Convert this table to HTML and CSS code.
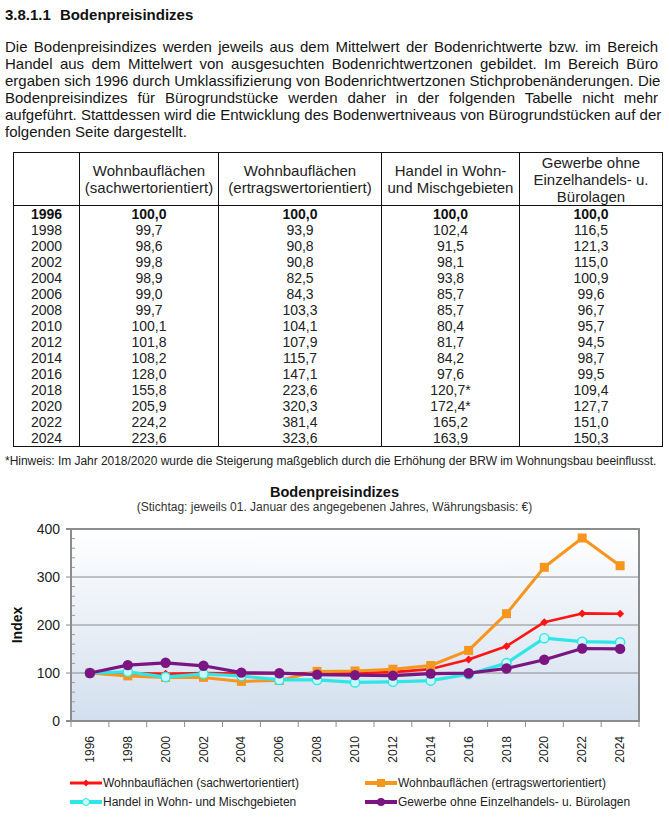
FILE: index.html
```html
<!DOCTYPE html>
<html lang="de">
<head>
<meta charset="utf-8">
<title>Bodenpreisindizes</title>
<link rel="stylesheet" href="styles.css">
</head>
<body>
<div class="page">
  <h1 class="heading"><span class="heading-num">3.8.1.1</span>Bodenpreisindizes</h1>
  <p class="intro">
    <span class="line">Die Bodenpreisindizes werden jeweils aus dem Mittelwert der Bodenrichtwerte bzw. im Bereich</span>
    <span class="line">Handel aus dem Mittelwert von ausgesuchten Bodenrichtwertzonen gebildet. Im Bereich Büro</span>
    <span class="line">ergaben sich 1996 durch Umklassifizierung von Bodenrichtwertzonen Stichprobenänderungen. Die</span>
    <span class="line">Bodenpreisindizes für Bürogrundstücke werden daher in der folgenden Tabelle nicht mehr</span>
    <span class="line">aufgeführt. Stattdessen wird die Entwicklung des Bodenwertniveaus von Bürogrundstücken auf der</span>
    <span class="line last">folgenden Seite dargestellt.</span>
  </p>

  <table class="index-table">
    <colgroup>
      <col class="c-year"><col class="c-a"><col class="c-b"><col class="c-c"><col class="c-d">
    </colgroup>
    <thead>
      <tr>
        <th></th>
        <th>Wohnbauflächen<br>(sachwertorientiert)</th>
        <th>Wohnbauflächen<br>(ertragswertorientiert)</th>
        <th>Handel in Wohn-<br>und Mischgebieten</th>
        <th>Gewerbe ohne<br>Einzelhandels- u.<br>Bürolagen</th>
      </tr>
    </thead>
    <tbody>
      <tr class="base"><td>1996</td><td>100,0</td><td>100,0</td><td>100,0</td><td>100,0</td></tr>
      <tr><td>1998</td><td>99,7</td><td>93,9</td><td>102,4</td><td>116,5</td></tr>
      <tr><td>2000</td><td>98,6</td><td>90,8</td><td>91,5</td><td>121,3</td></tr>
      <tr><td>2002</td><td>99,8</td><td>90,8</td><td>98,1</td><td>115,0</td></tr>
      <tr><td>2004</td><td>98,9</td><td>82,5</td><td>93,8</td><td>100,9</td></tr>
      <tr><td>2006</td><td>99,0</td><td>84,3</td><td>85,7</td><td>99,6</td></tr>
      <tr><td>2008</td><td>99,7</td><td>103,3</td><td>85,7</td><td>96,7</td></tr>
      <tr><td>2010</td><td>100,1</td><td>104,1</td><td>80,4</td><td>95,7</td></tr>
      <tr><td>2012</td><td>101,8</td><td>107,9</td><td>81,7</td><td>94,5</td></tr>
      <tr><td>2014</td><td>108,2</td><td>115,7</td><td>84,2</td><td>98,7</td></tr>
      <tr><td>2016</td><td>128,0</td><td>147,1</td><td>97,6</td><td>99,5</td></tr>
      <tr><td>2018</td><td>155,8</td><td>223,6</td><td>120,7*</td><td>109,4</td></tr>
      <tr><td>2020</td><td>205,9</td><td>320,3</td><td>172,4*</td><td>127,7</td></tr>
      <tr><td>2022</td><td>224,2</td><td>381,4</td><td>165,2</td><td>151,0</td></tr>
      <tr><td>2024</td><td>223,6</td><td>323,6</td><td>163,9</td><td>150,3</td></tr>
    </tbody>
  </table>

  <p class="note">*Hinweis: Im Jahr 2018/2020 wurde die Steigerung maßgeblich durch die Erhöhung der BRW im Wohnungsbau beeinflusst.</p>

  <section class="chart">
    <h2 class="chart-title">Bodenpreisindizes</h2>
    <p class="chart-sub">(Stichtag: jeweils 01. Januar des angegebenen Jahres, Währungsbasis: €)</p>
    <svg class="plot" width="669" height="258" viewBox="0 0 669 258" xmlns="http://www.w3.org/2000/svg">
      <defs>
        <linearGradient id="bg" x1="0" y1="0" x2="0" y2="1">
          <stop offset="0" stop-color="#ffffff"/>
          <stop offset="1" stop-color="#d3dfee"/>
        </linearGradient>
        <marker id="m-red" markerUnits="userSpaceOnUse" markerWidth="10" markerHeight="10" refX="5" refY="5" overflow="visible">
          <path d="M5 1 L9 5 L5 9 L1 5 Z" fill="#ff1414"/>
        </marker>
        <marker id="m-orange" markerUnits="userSpaceOnUse" markerWidth="10" markerHeight="10" refX="5" refY="5" overflow="visible">
          <rect x="0.5" y="0.5" width="9" height="9" fill="#f7961e"/>
        </marker>
        <marker id="m-cyan" markerUnits="userSpaceOnUse" markerWidth="12" markerHeight="12" refX="6" refY="6" overflow="visible">
          <circle cx="6" cy="6" r="4.6" fill="#c8f8f8" stroke="#2fe6e6" stroke-width="1.4"/>
        </marker>
        <marker id="m-purple" markerUnits="userSpaceOnUse" markerWidth="12" markerHeight="12" refX="6" refY="6" overflow="visible">
          <circle cx="6" cy="6" r="5.2" fill="#7a1582"/>
        </marker>
      </defs>

      <rect x="71" y="15" width="568" height="192" fill="url(#bg)"/>
      <g stroke="#8a8a8a" stroke-width="1">
        <line x1="66" y1="63" x2="639" y2="63"/>
        <line x1="66" y1="111" x2="639" y2="111"/>
        <line x1="66" y1="159" x2="639" y2="159"/>
      </g>
      <g stroke="#8c8c8c" stroke-width="2" fill="none">
        <line x1="66" y1="15" x2="640" y2="15"/>
        <line x1="639" y1="15" x2="639" y2="208"/>
        <line x1="66" y1="207" x2="640" y2="207"/>
        <line x1="71" y1="14" x2="71" y2="208"/>
      </g>
      <g stroke="#9a9a9a" stroke-width="1">
        <line x1="72" y1="24.6" x2="75" y2="24.6"/><line x1="72" y1="34.2" x2="75" y2="34.2"/><line x1="72" y1="43.8" x2="75" y2="43.8"/><line x1="72" y1="53.4" x2="75" y2="53.4"/>
        <line x1="72" y1="72.6" x2="75" y2="72.6"/><line x1="72" y1="82.2" x2="75" y2="82.2"/><line x1="72" y1="91.8" x2="75" y2="91.8"/><line x1="72" y1="101.4" x2="75" y2="101.4"/>
        <line x1="72" y1="120.6" x2="75" y2="120.6"/><line x1="72" y1="130.2" x2="75" y2="130.2"/><line x1="72" y1="139.8" x2="75" y2="139.8"/><line x1="72" y1="149.4" x2="75" y2="149.4"/>
        <line x1="72" y1="168.6" x2="75" y2="168.6"/><line x1="72" y1="178.2" x2="75" y2="178.2"/><line x1="72" y1="187.8" x2="75" y2="187.8"/><line x1="72" y1="197.4" x2="75" y2="197.4"/>
      </g>
      <g stroke="#8c8c8c" stroke-width="1">
        <line x1="71" y1="207" x2="71" y2="213"/><line x1="108.9" y1="207" x2="108.9" y2="213"/><line x1="146.7" y1="207" x2="146.7" y2="213"/><line x1="184.6" y1="207" x2="184.6" y2="213"/>
        <line x1="222.5" y1="207" x2="222.5" y2="213"/><line x1="260.4" y1="207" x2="260.4" y2="213"/><line x1="298.2" y1="207" x2="298.2" y2="213"/><line x1="336.1" y1="207" x2="336.1" y2="213"/>
        <line x1="374" y1="207" x2="374" y2="213"/><line x1="411.8" y1="207" x2="411.8" y2="213"/><line x1="449.7" y1="207" x2="449.7" y2="213"/><line x1="487.6" y1="207" x2="487.6" y2="213"/>
        <line x1="525.4" y1="207" x2="525.4" y2="213"/><line x1="563.3" y1="207" x2="563.3" y2="213"/><line x1="601.2" y1="207" x2="601.2" y2="213"/><line x1="639" y1="207" x2="639" y2="213"/>
      </g>

      <g class="ylab" text-anchor="end">
        <text x="60" y="20">400</text>
        <text x="60" y="68">300</text>
        <text x="60" y="116">200</text>
        <text x="60" y="164">100</text>
        <text x="60" y="212">0</text>
      </g>
      <text class="ytitle" transform="translate(22 111) rotate(-90)" text-anchor="middle">Index</text>

      <g fill="none" stroke-linejoin="round">
        <polyline stroke="#ff1414" stroke-width="2.6" marker-start="url(#m-red)" marker-mid="url(#m-red)" marker-end="url(#m-red)"
          points="89.9,159 127.8,159.1 165.6,159.7 203.5,159.1 241.4,159.5 279.3,159.5 317.1,159.1 355,159 392.9,158.1 430.7,155.1 468.6,145.6 506.5,132.2 544.3,108.2 582.2,99.4 620.1,99.7"/>
        <polyline stroke="#f7961e" stroke-width="3" marker-start="url(#m-orange)" marker-mid="url(#m-orange)" marker-end="url(#m-orange)"
          points="89.9,159 127.8,161.9 165.6,163.4 203.5,163.4 241.4,167.4 279.3,166.5 317.1,157.4 355,157 392.9,155.2 430.7,151.5 468.6,136.4 506.5,99.7 544.3,53.3 582.2,24 620.1,51.7"/>
        <polyline stroke="#2fe6e6" stroke-width="3.2" marker-start="url(#m-cyan)" marker-mid="url(#m-cyan)" marker-end="url(#m-cyan)"
          points="89.9,159 127.8,157.8 165.6,163.1 203.5,159.9 241.4,162 279.3,165.9 317.1,165.9 355,168.4 392.9,167.8 430.7,166.6 468.6,160.2 506.5,149.1 544.3,124.2 582.2,127.7 620.1,128.3"/>
        <polyline stroke="#7a1582" stroke-width="3.2" marker-start="url(#m-purple)" marker-mid="url(#m-purple)" marker-end="url(#m-purple)"
          points="89.9,159 127.8,151.1 165.6,148.8 203.5,151.8 241.4,158.6 279.3,159.2 317.1,160.6 355,161.1 392.9,161.6 430.7,159.6 468.6,159.2 506.5,154.5 544.3,145.7 582.2,134.5 620.1,134.9"/>
      </g>

      <g class="xlab" text-anchor="end">
        <text transform="translate(94 222) rotate(-90)">1996</text>
        <text transform="translate(131.8 222) rotate(-90)">1998</text>
        <text transform="translate(169.6 222) rotate(-90)">2000</text>
        <text transform="translate(207.5 222) rotate(-90)">2002</text>
        <text transform="translate(245.4 222) rotate(-90)">2004</text>
        <text transform="translate(283.3 222) rotate(-90)">2006</text>
        <text transform="translate(321.1 222) rotate(-90)">2008</text>
        <text transform="translate(359 222) rotate(-90)">2010</text>
        <text transform="translate(396.9 222) rotate(-90)">2012</text>
        <text transform="translate(434.7 222) rotate(-90)">2014</text>
        <text transform="translate(472.6 222) rotate(-90)">2016</text>
        <text transform="translate(510.5 222) rotate(-90)">2018</text>
        <text transform="translate(548.3 222) rotate(-90)">2020</text>
        <text transform="translate(586.2 222) rotate(-90)">2022</text>
        <text transform="translate(624.1 222) rotate(-90)">2024</text>
      </g>
    </svg>

    <ul class="legend">
      <li class="legend-item">
        <svg class="swatch" width="32" height="10" viewBox="0 0 32 10"><line x1="0" y1="5" x2="32" y2="5" stroke="#ff1414" stroke-width="3"/><path d="M16 1.5 L19.5 5 L16 8.5 L12.5 5 Z" fill="#ff1414"/></svg>
        <span>Wohnbauflächen (sachwertorientiert)</span>
      </li>
      <li class="legend-item">
        <svg class="swatch" width="32" height="10" viewBox="0 0 32 10"><line x1="0" y1="5" x2="32" y2="5" stroke="#f7961e" stroke-width="4"/><rect x="12" y="1" width="8" height="8" fill="#f7961e"/></svg>
        <span>Wohnbauflächen (ertragswertorientiert)</span>
      </li>
      <li class="legend-item">
        <svg class="swatch" width="32" height="10" viewBox="0 0 32 10"><line x1="0" y1="5" x2="32" y2="5" stroke="#2fe6e6" stroke-width="4"/><circle cx="16" cy="5" r="3.5" fill="#c8f8f8" stroke="#2fe6e6"/></svg>
        <span>Handel in Wohn- und Mischgebieten</span>
      </li>
      <li class="legend-item">
        <svg class="swatch" width="32" height="10" viewBox="0 0 32 10"><line x1="0" y1="5" x2="32" y2="5" stroke="#7a1582" stroke-width="4"/><circle cx="16" cy="5" r="4" fill="#7a1582"/></svg>
        <span>Gewerbe ohne Einzelhandels- u. Bürolagen</span>
      </li>
    </ul>
  </section>
</div>
</body>
</html>
```
FILE: styles.css
```css
* { box-sizing: border-box; }

html, body {
  margin: 0;
  padding: 0;
  background: #ffffff;
}

body {
  width: 669px;
  font-family: "Liberation Sans", Arial, sans-serif;
  color: #151515;
}

.page {
  padding: 6px 7px 0 5px;
}

.heading {
  margin: 0;
  font-size: 15px;
  line-height: 17px;
  font-weight: bold;
  color: #111;
}

.heading-num {
  margin-right: 9px;
}

.intro {
  margin: 15px 4px 0 0;
  font-size: 15px;
  line-height: 17px;
}

.intro .line {
  display: block;
  text-align: justify;
  text-align-last: justify;
  white-space: nowrap;
}

.intro .line.last {
  text-align-last: left;
}

.index-table {
  margin: 12px 0 0 8px;
  width: 649px;
  border-collapse: collapse;
  border: 1.5px solid #111;
  table-layout: fixed;
}

.c-year { width: 66px; }
.c-a { width: 139px; }
.c-b { width: 163px; }
.c-c { width: 138px; }
.c-d { width: 143px; }

.index-table th {
  height: 53px;
  font-size: 15px;
  line-height: 17px;
  font-weight: normal;
  text-align: center;
  padding: 0;
  border: 1px solid #111;
  border-bottom: 1.5px solid #111;
  color: #222;
}

.index-table td {
  font-size: 14px;
  line-height: 16px;
  height: 16px;
  padding: 0;
  text-align: center;
  border-left: 1px solid #111;
  border-right: 1px solid #111;
  color: #222;
}

.index-table .base td {
  font-weight: bold;
  color: #111;
}

.note {
  margin: 6px 0 0;
  font-size: 12px;
  line-height: 16px;
  letter-spacing: -0.04px;
  color: #222;
}

.chart {
  margin: 0 -7px 0 -5px;
}

.chart-title {
  margin: 15px 0 0;
  font-size: 14.5px;
  line-height: 16px;
  font-weight: bold;
  text-align: center;
  color: #111;
}

.chart-sub {
  margin: 0;
  font-size: 12px;
  line-height: 14px;
  text-align: center;
  color: #333;
}

.plot {
  display: block;
}

.ylab text {
  font-family: "Liberation Sans", Arial, sans-serif;
  font-size: 14px;
  fill: #222;
}

.ytitle {
  font-family: "Liberation Sans", Arial, sans-serif;
  font-size: 14px;
  font-weight: bold;
  fill: #111;
}

.xlab text {
  font-family: "Liberation Sans", Arial, sans-serif;
  font-size: 12px;
  fill: #222;
}

.legend {
  list-style: none;
  margin: 3px 0 0;
  padding: 0 0 0 70px;
  display: grid;
  grid-template-columns: 295px auto;
  row-gap: 3px;
}

.legend-item {
  display: flex;
  align-items: center;
  gap: 1px;
  font-size: 12px;
  line-height: 16px;
  color: #222;
}

.swatch {
  display: block;
  flex: none;
}
```
